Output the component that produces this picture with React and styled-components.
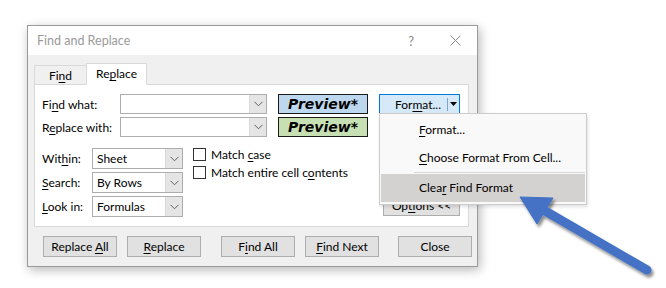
import styled, { createGlobalStyle } from "styled-components"

const GlobalStyle = createGlobalStyle`
    html, body {
        margin: 0;
        background: #fff;
    }
    body {
        font-family: Lato, "Noto Sans", sans-serif;
        font-size: 12px;
        color: #000;
    }
    u {
        text-decoration-thickness: 1px;
        text-underline-offset: 2px;
    }
`

const Chevron = () => (
    <svg width="9" height="6" viewBox="0 0 9 6">
        <path d="M0.5 0.8 L4.5 4.8 L8.5 0.8" fill="none" stroke="#606060" strokeWidth="1" />
    </svg>
)

const Combo = ({ value, width }) => (
    <ComboBox $width={width}>
        <ComboText>{value}</ComboText>
        <ComboButton><Chevron /></ComboButton>
    </ComboBox>
)

const App = () => {
    return (
        <>
            <GlobalStyle />
            <Page>
                <Dialog>
                    <TitleBar>
                        <Title>Find and Replace</Title>
                        <TitleActions>
                            <Help>?</Help>
                            <svg width="11" height="11" viewBox="0 0 11 11">
                                <path d="M0.5 0.5 L10.5 10.5 M10.5 0.5 L0.5 10.5" stroke="#8a8a8a" strokeWidth="1" />
                            </svg>
                        </TitleActions>
                    </TitleBar>
                    <Body>
                        <Tabs>
                            <Tab>Fi<u>n</u>d</Tab>
                            <Tab $active>Re<u>p</u>lace</Tab>
                        </Tabs>
                        <Panel>
                            <TopGrid>
                                <Label>Fi<u>n</u>d what:</Label>
                                <Combo />
                                <Preview $bg="#bdd7ee">Preview*</Preview>
                                <FormatWrap>
                                    <FormatButton>
                                        <FormatText>For<u>m</u>at...</FormatText>
                                        <FormatSplit>
                                            <svg width="7" height="4" viewBox="0 0 7 4">
                                                <path d="M0 0 L7 0 L3.5 4 Z" fill="#000" />
                                            </svg>
                                        </FormatSplit>
                                    </FormatButton>
                                    <Menu>
                                        <MenuItem><u>F</u>ormat...</MenuItem>
                                        <MenuItem><u>C</u>hoose Format From Cell...</MenuItem>
                                        <MenuSeparator />
                                        <MenuItem $hover>Clea<u>r</u> Find Format</MenuItem>
                                    </Menu>
                                </FormatWrap>
                                <Label>R<u>e</u>place with:</Label>
                                <Combo />
                                <Preview $bg="#c6e0b4">Preview*</Preview>
                            </TopGrid>
                            <Lower>
                                <Selects>
                                    <Label>Wit<u>h</u>in:</Label>
                                    <Combo value="Sheet" width={91} />
                                    <Label><u>S</u>earch:</Label>
                                    <Combo value="By Rows" width={91} />
                                    <Label><u>L</u>ook in:</Label>
                                    <Combo value="Formulas" width={91} />
                                </Selects>
                                <Checks>
                                    <Check><Box /><span>Match <u>c</u>ase</span></Check>
                                    <Check><Box /><span>Match entire cell c<u>o</u>ntents</span></Check>
                                </Checks>
                                <OptionsButton>Op<u>t</u>ions &lt;&lt;</OptionsButton>
                            </Lower>
                        </Panel>
                        <Footer>
                            <Button>Replace <u>A</u>ll</Button>
                            <Button><u>R</u>eplace</Button>
                            <Button $gap={20}>F<u>i</u>nd All</Button>
                            <Button><u>F</u>ind Next</Button>
                            <Button $gap={19}>Close</Button>
                        </Footer>
                    </Body>
                </Dialog>
                <Arrow width="666" height="288" viewBox="0 0 666 288">
                    <defs>
                        <filter id="sh" x="-20%" y="-20%" width="140%" height="140%">
                            <feDropShadow dx="2" dy="3" stdDeviation="1.6" floodColor="#000" floodOpacity="0.45" />
                        </filter>
                    </defs>
                    <g filter="url(#sh)" fill="#4472c4" stroke="#4472c4">
                        <line x1="647" y1="270" x2="540" y2="208" strokeWidth="9" strokeLinecap="round" />
                        <polygon points="520,197 553,198 537,224" strokeWidth="1" strokeLinejoin="round" />
                    </g>
                </Arrow>
            </Page>
        </>
    )
}

const Page = styled.div`
    position: relative;
    width: 666px;
    height: 288px;
    padding: 25px 0 0 27px;
    box-sizing: border-box;
`
const Dialog = styled.div`
    width: 451px;
    height: 242px;
    box-sizing: border-box;
    border: 1px solid #9a9a9a;
    background: #f0f0f0;
    box-shadow: 2px 3px 10px rgba(0, 0, 0, 0.28);
    display: flex;
    flex-direction: column;
`
const TitleBar = styled.div`
    height: 29px;
    background: #fff;
    display: flex;
    align-items: center;
    justify-content: space-between;
    padding: 0 16px 0 9px;
`
const Title = styled.span`
    font-size: 12.5px;
    color: #9a9a9a;
`
const TitleActions = styled.div`
    display: flex;
    align-items: center;
    gap: 36px;
`
const Help = styled.span`
    font-size: 13px;
    color: #8a8a8a;
`
const Body = styled.div`
    flex: 1;
    padding: 7px 0 0 6px;
    display: flex;
    flex-direction: column;
`
const Tabs = styled.div`
    display: flex;
    align-items: flex-end;
    height: 22px;
    position: relative;
    z-index: 1;
`
const Tab = styled.div`
    height: ${p => (p.$active ? "22px" : "19px")};
    line-height: ${p => (p.$active ? "20px" : "19px")};
    width: ${p => (p.$active ? "61px" : "52px")};
    box-sizing: border-box;
    text-align: center;
    border: 1px solid #d9d9d9;
    border-bottom: ${p => (p.$active ? "1px solid #fff" : "none")};
    background: ${p => (p.$active ? "#fff" : "#f0f0f0")};
    margin-bottom: ${p => (p.$active ? "-1px" : "0")};
    ${p => !p.$active && "border-right: none;"}
`
const Panel = styled.div`
    width: 435px;
    height: 143px;
    box-sizing: border-box;
    background: #fff;
    border: 1px solid #d9d9d9;
    padding: 9px 8px 0 7px;
`
const TopGrid = styled.div`
    display: grid;
    grid-template-columns: 67px 147px 90px 81px;
    column-gap: 11px;
    row-gap: 3px;
    grid-auto-rows: 20px;
    align-items: center;
`
const Label = styled.span`
    white-space: nowrap;
`
const ComboBox = styled.div`
    width: ${p => (p.$width ? `${p.$width}px` : "100%")};
    height: 100%;
    box-sizing: border-box;
    border: 1px solid #adadad;
    display: flex;
    background: #fff;
`
const ComboText = styled.span`
    flex: 1;
    padding-left: 4px;
    display: flex;
    align-items: center;
`
const ComboButton = styled.span`
    width: 16px;
    background: #e5e5e5;
    border-left: 1px solid #dadada;
    display: flex;
    align-items: center;
    justify-content: center;
`
const Preview = styled.div`
    height: 100%;
    box-sizing: border-box;
    border: 1.5px solid #1a1a1a;
    background: ${p => p.$bg};
    display: flex;
    align-items: center;
    justify-content: center;
    font-family: "DejaVu Sans", "Noto Sans", sans-serif;
    font-weight: 700;
    font-style: italic;
    font-size: 14px;
`
const FormatWrap = styled.div`
    position: relative;
    height: 100%;
`
const FormatButton = styled.div`
    height: 100%;
    box-sizing: border-box;
    border: 1px solid #0078d7;
    background: #d6e9f8;
    display: flex;
    align-items: center;
`
const FormatText = styled.span`
    flex: 1;
    text-align: right;
    padding-right: 6px;
`
const FormatSplit = styled.span`
    width: 10px;
    height: 13px;
    border-left: 1px solid #7aa7cf;
    display: flex;
    align-items: center;
    justify-content: center;
    margin-right: 1px;
`
const Menu = styled.div`
    position: absolute;
    top: 19px;
    left: 0;
    width: 208px;
    box-sizing: border-box;
    background: #f9f9f9;
    border: 1px solid #cccccc;
    box-shadow: 1px 2px 3px rgba(0, 0, 0, 0.12);
    padding: 2px 1px;
    z-index: 5;
`
const MenuItem = styled.div`
    height: 28px;
    line-height: 28px;
    padding-left: 38px;
    background: ${p => (p.$hover ? "#d3d2d0" : "transparent")};
`
const MenuSeparator = styled.div`
    height: 1px;
    background: #d7d7d7;
    margin: 0 0 1px 33px;
`
const Lower = styled.div`
    display: flex;
    margin-top: 11px;
    position: relative;
`
const Selects = styled.div`
    display: grid;
    grid-template-columns: 50px 91px;
    grid-auto-rows: 21px;
    row-gap: 3px;
    align-items: center;
`
const Checks = styled.div`
    display: flex;
    flex-direction: column;
    gap: 5px;
    margin-left: 10px;
`
const Check = styled.label`
    display: flex;
    align-items: center;
    gap: 5px;
    height: 13px;
`
const Box = styled.span`
    width: 13px;
    height: 13px;
    box-sizing: border-box;
    border: 1px solid #333;
    background: #fff;
`
const OptionsButton = styled.div`
    margin-left: auto;
    align-self: flex-end;
    width: 77px;
    height: 20px;
    line-height: 18px;
    box-sizing: border-box;
    border: 1px solid #adadad;
    background: #e1e1e1;
    text-align: center;
    margin-bottom: 1px;
`
const Footer = styled.div`
    display: flex;
    padding: 9px 0 0 9px;
`
const Button = styled.div`
    width: 74px;
    height: 21px;
    line-height: 19px;
    box-sizing: border-box;
    border: 1px solid #adadad;
    background: #e1e1e1;
    text-align: center;
    margin-left: ${p => (p.$gap ? p.$gap : 10)}px;
    &:first-child {
        margin-left: 0;
    }
`
const Arrow = styled.svg`
    position: absolute;
    left: 0;
    top: 0;
    pointer-events: none;
    z-index: 10;
`

export default App
